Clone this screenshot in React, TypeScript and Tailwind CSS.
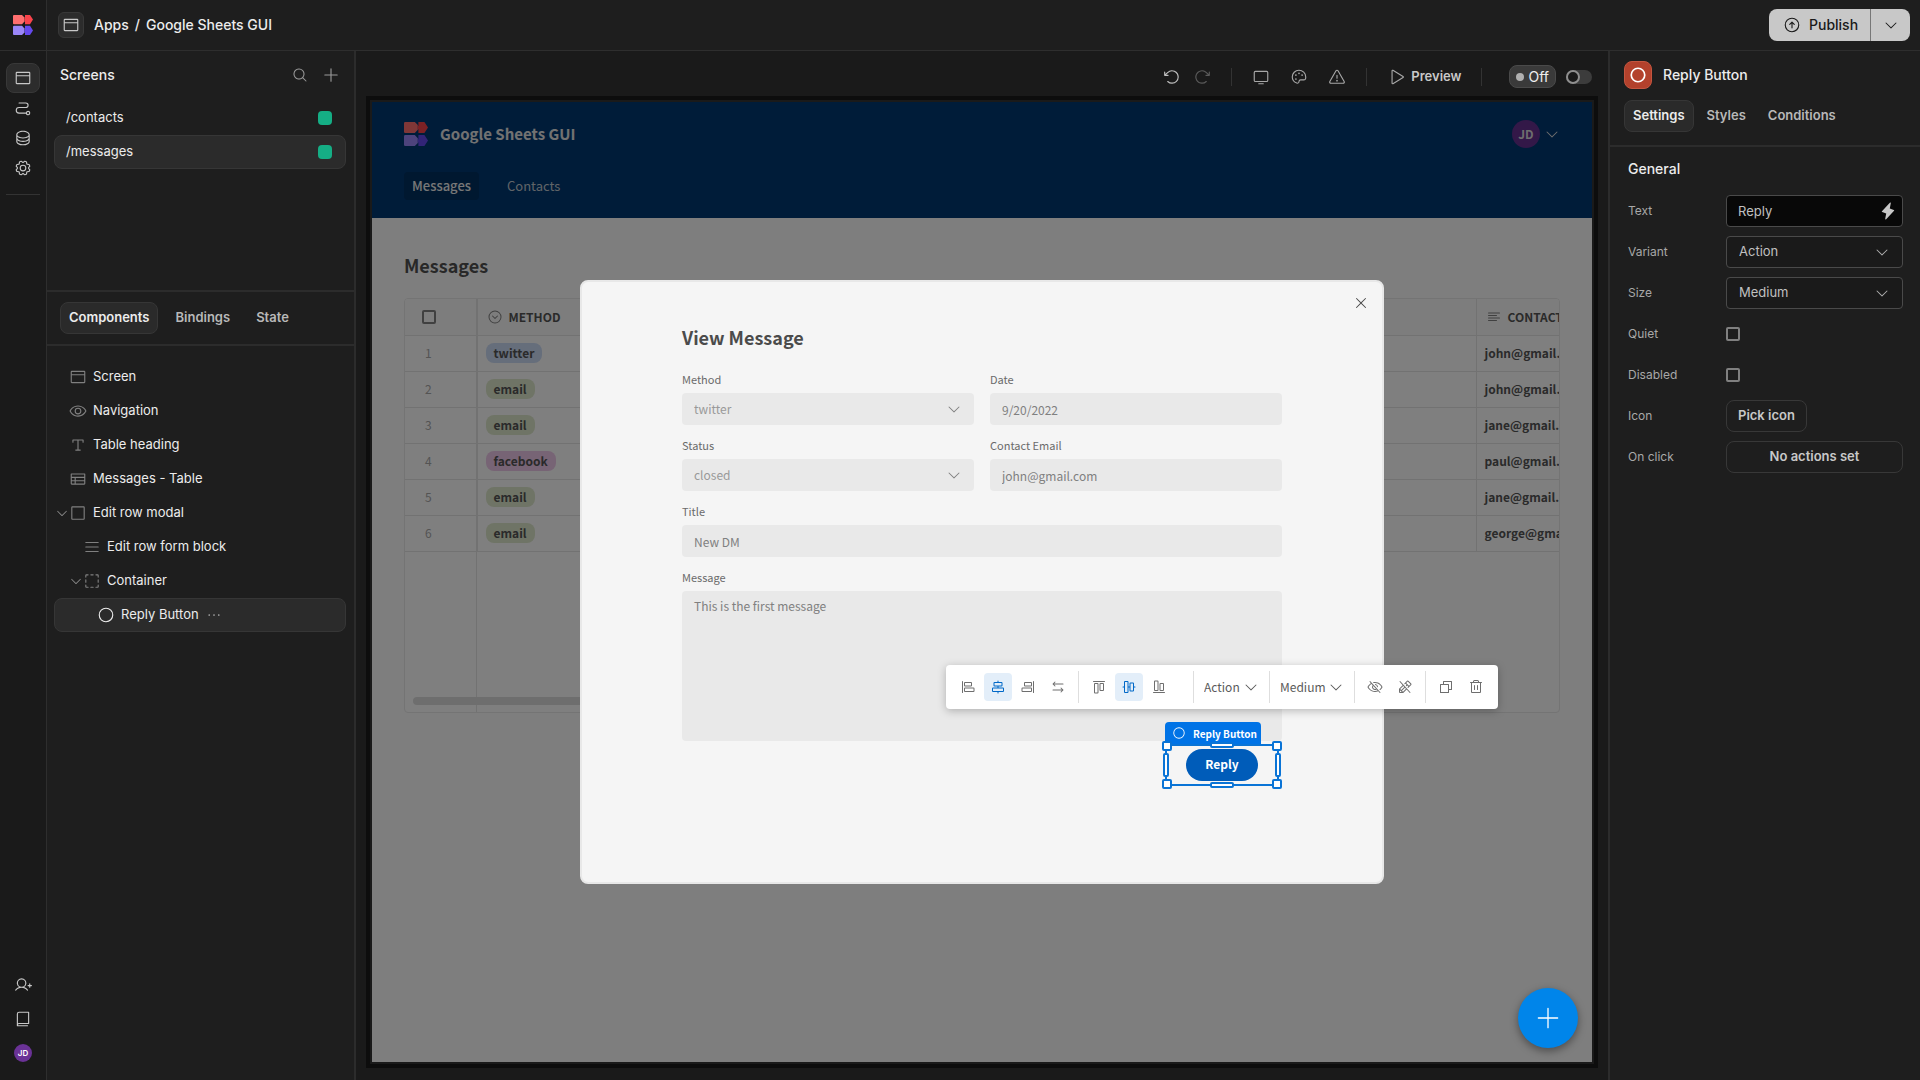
import React, { useState } from 'react';
import type { IconType } from 'react-icons';
import {
  PiAlignBottom,
  PiAlignCenterHorizontal,
  PiAlignCenterVertical,
  PiAlignLeft,
  PiAlignRight,
  PiAlignTop,
  PiArrowClockwise,
  PiArrowCounterClockwise,
  PiArrowCircleUp,
  PiArrowsLeftRight,
  PiBook,
  PiBrowser,
  PiCaretCircleDown,
  PiCaretDown,
  PiCircle,
  PiCircleBold,
  PiCopy,
  PiDatabase,
  PiDotsThree,
  PiEye,
  PiEyeSlash,
  PiGear,
  PiLightningFill,
  PiList,
  PiMagnifyingGlass,
  PiMonitor,
  PiPalette,
  PiPath,
  PiPencilSlash,
  PiPlay,
  PiPlus,
  PiPlusLight,
  PiSelection,
  PiSquare,
  PiTable,
  PiTextAlignLeft,
  PiTextT,
  PiTrash,
  PiUserPlus,
  PiWarning,
  PiX,
} from 'react-icons/pi';

const Logo = ({ className }: { className?: string }) => (
  <svg viewBox="0 0 20 20" className={className} aria-hidden="true">
    <path d="M0 1Q0 0 1 0H9L11.5 2.500V6.500L9 9.200H1Q0 9.200 0 8.200Z" fill="#ff6f6f" />
    <path d="M12 0H17L20 4.600L17 9.200H12V6.200L11.500 5.500V3.800L12 3.200Z" fill="#f9434b" />
    <path d="M0 11.800Q0 10.800 1 10.800H9L11.500 13.500V17.500L9 20H1Q0 20 0 19Z" fill="#9a86f8" />
    <path d="M12 10.800H17L20 15.400L17 20H12V17.200L11.500 16.500V14.800L12 14.200Z" fill="#6549ee" />
  </svg>
);

const railItems = [
  { name: 'Design', icon: PiBrowser, active: true },
  { name: 'Automations', icon: PiPath },
  { name: 'Data', icon: PiDatabase },
  { name: 'Settings', icon: PiGear },
];

const Rail = () => (
  <nav className="flex w-[47px] shrink-0 flex-col items-center border-r border-[#2e2e2e] bg-[#1a1a1a] pb-[18px] text-[#c8c8c8]">
    <a href="#home" aria-label="Home" className="flex h-[51px] w-full items-center justify-center border-b border-[#2e2e2e]">
      <Logo className="h-5 w-5" />
    </a>
    <div className="mt-3 flex flex-col">
      {railItems.map(({ name, icon: Icon, active }) => (
        <button
          key={name}
          aria-label={name}
          className={`flex h-[30px] w-[34px] items-center justify-center rounded-lg ${
            active ? 'border border-[#383838] bg-[#2c2c2c]' : ''
          }`}
        >
          <Icon className="h-[18px] w-[18px]" />
        </button>
      ))}
    </div>
    <div className="mt-[11px] h-px w-[34px] bg-[#333]" />
    <div className="mt-auto flex flex-col items-center gap-4">
      <button aria-label="Invite">
        <PiUserPlus className="h-[18px] w-[18px]" />
      </button>
      <button aria-label="Docs">
        <PiBook className="h-[18px] w-[18px]" />
      </button>
      <button className="flex h-[18px] w-[18px] items-center justify-center rounded-full bg-[#6a3296] text-[8px] font-semibold text-white">
        JD
      </button>
    </div>
  </nav>
);

const TopBar = () => (
  <header className="flex h-[51px] shrink-0 items-center border-b border-[#2e2e2e] pl-[11px] pr-[10px]">
    <button
      aria-label="Design"
      className="flex h-[26px] w-[26px] items-center justify-center rounded-md border border-[#383838] bg-[#2c2c2c] text-[#c8c8c8]"
    >
      <PiBrowser className="h-[18px] w-[18px]" />
    </button>
    <div className="ml-[10px] flex gap-[6px] text-sm font-medium text-[#ececec]">
      <a href="#apps">Apps</a>
      <span>/</span>
      <a href="#app">Google Sheets GUI</a>
    </div>
    <div className="ml-auto flex h-8 overflow-hidden rounded-lg bg-[#c8c8c8] text-[#1a1a1a]">
      <button className="flex w-[101px] items-center gap-2 pl-[14px] text-sm font-medium">
        <PiArrowCircleUp className="h-[18px] w-[18px]" />
        Publish
      </button>
      <button aria-label="Publish options" className="flex w-10 items-center justify-center border-l border-[#777]">
        <PiCaretDown className="h-4 w-4" />
      </button>
    </div>
  </header>
);

const Tabs = ({ tabs, gap }: { tabs: string[]; gap: string }) => {
  const [current, setCurrent] = useState(tabs[0]);

  return (
    <div className={`flex ${gap}`}>
      {tabs.map((tab) => (
        <button
          key={tab}
          onClick={() => setCurrent(tab)}
          className={`h-8 rounded-lg border px-2 text-[13px] font-semibold ${
            tab === current ? 'border-[#363636] bg-[#2a2a2a] text-[#ececec]' : 'border-transparent text-[#b8b8b8]'
          }`}
        >
          {tab}
        </button>
      ))}
    </div>
  );
};

const screens = ['/contacts', '/messages'];

interface TreeNode {
  name: string;
  icon: IconType;
  indent: string;
  open?: boolean;
  selected?: boolean;
}

const tree: TreeNode[] = [
  { name: 'Screen', icon: PiBrowser, indent: 'pl-0' },
  { name: 'Navigation', icon: PiEye, indent: 'pl-0' },
  { name: 'Table heading', icon: PiTextT, indent: 'pl-0' },
  { name: 'Messages - Table', icon: PiTable, indent: 'pl-0' },
  { name: 'Edit row modal', icon: PiSquare, indent: 'pl-0', open: true },
  { name: 'Edit row form block', icon: PiList, indent: 'pl-[14px]' },
  { name: 'Container', icon: PiSelection, indent: 'pl-[14px]', open: true },
  { name: 'Reply Button', icon: PiCircle, indent: 'pl-7', selected: true },
];

const LeftPanel = () => (
  <aside className="flex w-[309px] shrink-0 flex-col border-r-2 border-[#2c2c2c]">
    <section className="flex h-[241px] flex-col border-b-2 border-[#2c2c2c]">
      <div className="flex h-12 items-center pl-[13px] pr-[14px] text-sm font-medium text-[#ececec]">
        <h2>Screens</h2>
        <button aria-label="Search" className="ml-auto text-[#9a9a9a]">
          <PiMagnifyingGlass className="h-4 w-4" />
        </button>
        <button aria-label="Add screen" className="ml-[14px] text-[#9a9a9a]">
          <PiPlus className="h-[18px] w-[18px]" />
        </button>
      </div>
      <ul className="mt-[2px] pl-[7px] pr-2">
        {screens.map((screen) => (
          <li key={screen}>
            <a
              href={`#${screen}`}
              className={`flex h-[34px] items-center justify-between rounded-lg border pl-[11px] pr-[13px] text-[13px] text-[#ececec] ${
                screen === '/messages' ? 'border-[#363636] bg-[#2b2b2b]' : 'border-transparent'
              }`}
            >
              {screen}
              <span className="h-[14px] w-[14px] rounded bg-[#15ae85]" />
            </a>
          </li>
        ))}
      </ul>
    </section>

    <div className="border-b-2 border-[#2c2c2c] px-[13px] py-[10px]">
      <Tabs tabs={['Components', 'Bindings', 'State']} gap="gap-2" />
    </div>

    <ul className="mt-[14px] pl-[7px] pr-2">
      {tree.map(({ name, icon: Icon, indent, open, selected }) => (
        <li
          key={name}
          className={`flex h-[34px] items-center rounded-lg border text-[13px] text-[#ececec] ${
            selected ? 'border-[#363636] bg-[#2b2b2b]' : 'border-transparent'
          }`}
        >
          <span className={`flex items-center ${indent}`}>
            <span className="flex w-[14px] justify-center text-[#8a8a8a]">
              {open && <PiCaretDown className="h-[14px] w-[14px]" />}
            </span>
            <Icon className={`h-[18px] w-[18px] ${selected ? 'text-[#ececec]' : 'text-[#808080]'}`} />
            <span className="ml-[6px]">{name}</span>
          </span>
          {selected && (
            <button aria-label="More" className="ml-[6px] text-[#b0b0b0]">
              <PiDotsThree className="h-[18px] w-[18px]" />
            </button>
          )}
        </li>
      ))}
    </ul>
  </aside>
);

const Divider = () => <span className="h-[18px] w-px bg-[#333]" />;

const CanvasToolbar = () => (
  <div className="flex h-[45px] shrink-0 items-center justify-end pr-[6px] pt-[6px] text-[#a8a8a8]">
    <button aria-label="Undo" className="text-[#c0c0c0]">
      <PiArrowCounterClockwise className="h-[18px] w-[18px]" />
    </button>
    <button aria-label="Redo" className="ml-3 mr-5 text-[#5a5a5a]">
      <PiArrowClockwise className="h-[18px] w-[18px]" />
    </button>
    <Divider />
    <div className="mx-5 flex gap-5">
      <button aria-label="Screen size">
        <PiMonitor className="h-[18px] w-[18px]" />
      </button>
      <button aria-label="Theme">
        <PiPalette className="h-[18px] w-[18px]" />
      </button>
      <button aria-label="Issues">
        <PiWarning className="h-[18px] w-[18px]" />
      </button>
    </div>
    <Divider />
    <button className="mx-5 flex items-center gap-[6px] text-[13px] font-semibold text-[#c8c8c8]">
      <PiPlay className="h-[18px] w-[18px] text-[#a8a8a8]" />
      Preview
    </button>
    <Divider />
    <label className="ml-[27px] flex items-center gap-[10px]">
      <span className="flex h-[23px] items-center gap-1 rounded-lg border border-[#4a4a4a] bg-[#3a3a3a] px-[6px] text-sm text-[#f0f0f0]">
        <span className="h-2 w-2 rounded-full bg-[#b0b0b0]" />
        Off
      </span>
      <span className="relative flex">
        <input type="checkbox" className="peer h-[14px] w-[26px] appearance-none rounded-full bg-[#3c3c3c]" />
        <span className="pointer-events-none absolute left-0 top-0 h-[14px] w-[14px] rounded-full border-2 border-[#8f8f8f] bg-[#1a1a1a] peer-checked:left-3" />
      </span>
    </label>
  </div>
);

const rows = [
  { method: 'twitter', email: 'john@gmail.com', color: 'bg-[#cddcf6]' },
  { method: 'email', email: 'john@gmail.com', color: 'bg-[#dfe9cd]' },
  { method: 'email', email: 'jane@gmail.com', color: 'bg-[#dfe9cd]' },
  { method: 'facebook', email: 'paul@gmail.com', color: 'bg-[#efc8ea]' },
  { method: 'email', email: 'jane@gmail.com', color: 'bg-[#dfe9cd]' },
  { method: 'email', email: 'george@gmail.com', color: 'bg-[#dfe9cd]' },
];

const AppPreview = () => (
  <div className="flex min-w-0 flex-1 flex-col bg-[#fdfdfd]">
    <header className="bg-[#003872] px-8 py-[18px]">
      <div className="flex h-7 items-center">
        <Logo className="h-6 w-6" />
        <h1 className="ml-3 text-[15px] font-bold leading-6 text-[#e4e4e4]">Google Sheets GUI</h1>
        <button className="ml-auto flex h-7 w-7 items-center justify-center rounded-full bg-[#663090] text-xs font-bold text-[#ddd]">
          JD
        </button>
        <button aria-label="Account menu" className="ml-1 text-[#ddd]">
          <PiCaretDown className="h-4 w-4" />
        </button>
      </div>
      <nav className="mt-6 flex h-7 gap-5 text-[13px] leading-7">
        <a href="#messages" className="rounded bg-[#003060] px-2 font-medium text-[#eee]">
          Messages
        </a>
        <a href="#contacts" className="px-2 text-[#c0c8d0]">
          Contacts
        </a>
      </nav>
    </header>
    <main className="px-8 pt-[31px]">
      <h2 className="text-lg font-bold leading-8 text-[#505050]">Messages</h2>
      <div className="relative mt-[17px] h-[415px] overflow-hidden rounded border border-[#e8e8e8] bg-white">
        <div className="absolute inset-y-0 left-0 w-[72px] border-r border-[#e4e4e4]" />
        <table className="w-[1271px] table-fixed border-collapse text-xs font-bold text-[#555]">
          <colgroup>
            <col className="w-[72px]" />
            <col className="w-[200px]" />
            <col className="w-[799px]" />
            <col className="w-[200px]" />
          </colgroup>
          <thead>
            <tr className="h-9 border-b border-[#e4e4e4] bg-[#fafafa] text-left">
              <th className="border-r border-[#e4e4e4] pl-[17px]">
                <input
                  type="checkbox"
                  aria-label="Select all rows"
                  className="block h-[14px] w-[14px] appearance-none rounded-[2px] border-2 border-[#808080]"
                />
              </th>
              <th className="pl-[9px]">
                <span className="flex items-center gap-[6px]">
                  <PiCaretCircleDown className="h-4 w-4 text-[#808080]" />
                  METHOD
                </span>
              </th>
              <th className="border-r border-[#e4e4e4]" />
              <th className="pl-[9px]">
                <span className="flex items-center gap-[6px] whitespace-nowrap">
                  <PiTextAlignLeft className="h-4 w-4 text-[#808080]" />
                  CONTACT
                </span>
              </th>
            </tr>
          </thead>
          <tbody>
            {rows.map((row, i) => (
              <tr key={i} className="h-9 border-b border-[#e4e4e4]">
                <td className="border-r border-[#e4e4e4] pl-5 font-normal text-[#a8a8a8]">{i + 1}</td>
                <td className="pl-2">
                  <span className={`flex h-5 w-fit items-center rounded-lg px-2 ${row.color}`}>{row.method}</span>
                </td>
                <td className="border-r border-[#e4e4e4]" />
                <td className="pl-2">{row.email}</td>
              </tr>
            ))}
          </tbody>
        </table>
        <div className="absolute bottom-[7px] left-2 h-2 w-[640px] rounded bg-[#dcdcdc]" />
      </div>
    </main>
  </div>
);

const labelClass = 'h-[26px] text-[11px] leading-6 text-[#6a6a6a]';

const Field = ({ label, value, wide }: { label: string; value: string; wide?: boolean }) => (
  <label className={`flex flex-col ${wide ? 'col-span-2' : ''}`}>
    <span className={labelClass}>{label}</span>
    <input
      readOnly
      value={value}
      className="h-8 w-full rounded bg-[#e9e9e9] px-3 text-xs text-[#808080] outline-none"
    />
  </label>
);

const SelectField = ({ label, value }: { label: string; value: string }) => (
  <label className="flex flex-col">
    <span className={labelClass}>{label}</span>
    <span className="relative">
      <select className="block h-8 w-full appearance-none rounded bg-[#e9e9e9] px-3 text-xs text-[#999] outline-none">
        <option>{value}</option>
      </select>
      <PiCaretDown className="pointer-events-none absolute right-3 top-2 h-4 w-4 text-[#808080]" />
    </span>
  </label>
);

const ToolGroup = ({ items, active }: { items: [string, IconType][]; active?: string }) => (
  <div className="flex gap-[2px]">
    {items.map(([name, Icon]) => (
      <button
        key={name}
        aria-label={name}
        className={`flex h-7 w-7 items-center justify-center rounded-sm ${
          name === active ? 'bg-[#e3eef9] text-[#0068c8]' : 'text-[#6e6e6e]'
        }`}
      >
        <Icon className="h-4 w-4" />
      </button>
    ))}
  </div>
);

const ToolDivider = () => <span className="h-8 w-px bg-[#dedede]" />;

const ToolSelect = ({ label, value, className }: { label: string; value: string; className: string }) => (
  <span className={`relative ${className}`}>
    <select aria-label={label} className="block h-7 w-full appearance-none pl-[10px] text-xs text-[#5a5a5a] outline-none">
      <option>{value}</option>
    </select>
    <PiCaretDown className="pointer-events-none absolute right-[10px] top-[6px] h-4 w-4 text-[#5a5a5a]" />
  </span>
);

const ComponentToolbar = () => (
  <div className="absolute bottom-full left-1/2 mb-[37px] flex h-11 w-[552px] -translate-x-1/2 items-center rounded bg-white px-2 shadow-[0_2px_8px_rgba(0,0,0,0.25)]">
    <ToolGroup
      active="Align center"
      items={[
        ['Align left', PiAlignLeft],
        ['Align center', PiAlignCenterHorizontal],
        ['Align right', PiAlignRight],
        ['Stretch', PiArrowsLeftRight],
      ]}
    />
    <span className="w-[6px]" />
    <ToolDivider />
    <span className="w-[6px]" />
    <ToolGroup
      active="Align middle"
      items={[
        ['Align top', PiAlignTop],
        ['Align middle', PiAlignCenterVertical],
        ['Align bottom', PiAlignBottom],
      ]}
    />
    <span className="w-5" />
    <ToolDivider />
    <ToolSelect label="Variant" value="Action" className="w-[75px]" />
    <ToolDivider />
    <ToolSelect label="Size" value="Medium" className="w-[84px]" />
    <ToolDivider />
    <span className="w-[6px]" />
    <ToolGroup
      items={[
        ['Quiet', PiEyeSlash],
        ['Disabled', PiPencilSlash],
      ]}
    />
    <span className="w-[6px]" />
    <ToolDivider />
    <span className="w-[6px]" />
    <ToolGroup
      items={[
        ['Duplicate', PiCopy],
        ['Delete', PiTrash],
      ]}
    />
  </div>
);

const handles = [
  '-left-[5px] -top-[5px] h-[10px] w-[10px]',
  '-right-[5px] -top-[5px] h-[10px] w-[10px]',
  '-left-[5px] -bottom-[5px] h-[10px] w-[10px]',
  '-right-[5px] -bottom-[5px] h-[10px] w-[10px]',
  '-left-1 top-[7px] h-6 w-[6px]',
  '-right-1 top-[7px] h-6 w-[6px]',
  '-top-1 left-[43px] h-[6px] w-6',
  '-bottom-1 left-[43px] h-[6px] w-6',
];

const SelectedButton = () => (
  <div className="relative flex h-[42px] w-[114px] items-center justify-center border-2 border-[#0a74d6]">
    <div className="absolute -left-[2px] bottom-full mb-[2px] flex h-[22px] items-center gap-[7px] whitespace-nowrap rounded-t bg-[#0073e6] pl-[7px] pr-1 text-[10px] font-bold text-white">
      <PiCircle className="h-[14px] w-[14px]" />
      Reply Button
    </div>
    {handles.map((position) => (
      <span key={position} className={`absolute rounded-[2px] border-2 border-[#0a74d6] bg-white ${position}`} />
    ))}
    <button className="h-8 w-[72px] rounded-full bg-[#005cb9] pb-[2px] text-xs font-bold text-white">Reply</button>
    <ComponentToolbar />
  </div>
);

const MessageModal = () => (
  <div className="absolute inset-0 flex items-center justify-center bg-black/50">
    <div
      role="dialog"
      aria-label="View Message"
      className="relative h-[604px] w-[804px] rounded-lg border-2 border-[#e8e8e8] bg-[#f5f5f5] px-[100px] pt-[39px]"
    >
      <button aria-label="Close" className="absolute right-[13px] top-[13px] text-[#4b4b4b]">
        <PiX className="h-4 w-4" />
      </button>
      <h2 className="text-lg font-bold leading-8 text-[#4b4b4b]">View Message</h2>
      <div className="mt-[14px] grid grid-cols-2 gap-x-4 gap-y-2">
        <SelectField label="Method" value="twitter" />
        <Field label="Date" value="9/20/2022" />
        <SelectField label="Status" value="closed" />
        <Field label="Contact Email" value="john@gmail.com" />
        <Field label="Title" value="New DM" wide />
        <label className="col-span-2 flex flex-col">
          <span className={labelClass}>Message</span>
          <textarea
            readOnly
            value="This is the first message"
            className="h-[150px] w-full resize-none rounded bg-[#e9e9e9] px-3 py-[5px] text-xs leading-5 text-[#808080] outline-none"
          />
        </label>
      </div>
      <div className="mt-[3px] flex justify-end pr-[3px]">
        <SelectedButton />
      </div>
    </div>
  </div>
);

const Canvas = () => (
  <div className="flex min-w-0 flex-1 flex-col bg-[#1a1a1a] px-[10px] pb-3">
    <CanvasToolbar />
    <div className="flex flex-1 border-4 border-[#0d0d0d] p-[2px]">
      <div className="relative flex min-w-0 flex-1 font-['Noto_Sans_CJK_SC','Noto_Sans',sans-serif]">
        <AppPreview />
        <MessageModal />
        <button
          aria-label="New"
          className="absolute bottom-[14px] right-[14px] flex h-[60px] w-[60px] items-center justify-center rounded-full bg-[#0085ea] text-white shadow-[0_3px_8px_rgba(0,0,0,0.4)]"
        >
          <PiPlusLight className="h-7 w-7" />
        </button>
      </div>
    </div>
  </div>
);

const SettingRow = ({ label, id, children }: { label: string; id: string; children: React.ReactNode }) => (
  <div className="flex h-8 items-center">
    <label htmlFor={id} className="w-[98px] shrink-0 text-xs text-[#a8a8a8]">
      {label}
    </label>
    {children}
  </div>
);

const PanelSelect = ({ id, options }: { id: string; options: string[] }) => (
  <span className="relative flex-1">
    <select
      id={id}
      className="block h-8 w-full appearance-none rounded border border-[#4a4a4a] bg-[#1a1a1a] px-3 text-[13px] text-[#c0c0c0] outline-none"
    >
      {options.map((option) => (
        <option key={option}>{option}</option>
      ))}
    </select>
    <PiCaretDown className="pointer-events-none absolute right-[13px] top-2 h-4 w-4 text-[#b0b0b0]" />
  </span>
);

const checkboxClass = 'h-[14px] w-[14px] appearance-none rounded-[2px] border-2 border-[#808080]';

const RightPanel = () => (
  <aside className="w-[312px] shrink-0 border-l-2 border-[#2c2c2c]">
    <div className="border-b-2 border-[#2c2c2c] px-[14px] pb-[13px] pt-[10px]">
      <div className="mb-[11px] flex items-center gap-[11px] text-sm font-medium text-[#ececec]">
        <span className="flex h-7 w-7 items-center justify-center rounded-lg border border-[#c4553f] bg-[#b3412c] text-white">
          <PiCircleBold className="h-[18px] w-[18px]" />
        </span>
        Reply Button
      </div>
      <Tabs tabs={['Settings', 'Styles', 'Conditions']} gap="gap-1" />
    </div>

    <section className="pl-[18px] pr-[17px] pt-3">
      <h3 className="mb-4 text-sm font-medium text-[#ececec]">General</h3>
      <div className="flex flex-col gap-[9px]">
        <SettingRow label="Text" id="text">
          <span className="relative flex-1">
            <input
              id="text"
              defaultValue="Reply"
              className="block h-8 w-full rounded border border-[#4a4a4a] bg-[#080808] px-[11px] text-[13px] text-[#c0c0c0] outline-none"
            />
            <button aria-label="Bind text" className="absolute right-[6px] top-[7px] text-[#c8c8c8]">
              <PiLightningFill className="h-[18px] w-[18px]" />
            </button>
          </span>
        </SettingRow>
        <SettingRow label="Variant" id="variant">
          <PanelSelect id="variant" options={['Action', 'Primary', 'Secondary']} />
        </SettingRow>
        <SettingRow label="Size" id="size">
          <PanelSelect id="size" options={['Medium', 'Small', 'Large']} />
        </SettingRow>
        <SettingRow label="Quiet" id="quiet">
          <input id="quiet" type="checkbox" className={checkboxClass} />
        </SettingRow>
        <SettingRow label="Disabled" id="disabled">
          <input id="disabled" type="checkbox" className={checkboxClass} />
        </SettingRow>
        <SettingRow label="Icon" id="icon">
          <button id="icon" className="h-8 rounded-lg border border-[#383838] px-[11px] text-[13px] font-semibold text-[#c8c8c8]">
            Pick icon
          </button>
        </SettingRow>
        <SettingRow label="On click" id="on-click">
          <button id="on-click" className="h-8 flex-1 rounded-lg border border-[#383838] text-[13px] font-semibold text-[#c8c8c8]">
            No actions set
          </button>
        </SettingRow>
      </div>
    </section>
  </aside>
);

const App: React.FC = () => {
  return (
    <div className="flex min-h-screen bg-[#1e1e1e] font-['Inter',sans-serif]">
      <Rail />
      <div className="flex min-w-0 flex-1 flex-col">
        <TopBar />
        <div className="flex min-w-0 flex-1">
          <LeftPanel />
          <Canvas />
          <RightPanel />
        </div>
      </div>
    </div>
  );
};

export default App;
